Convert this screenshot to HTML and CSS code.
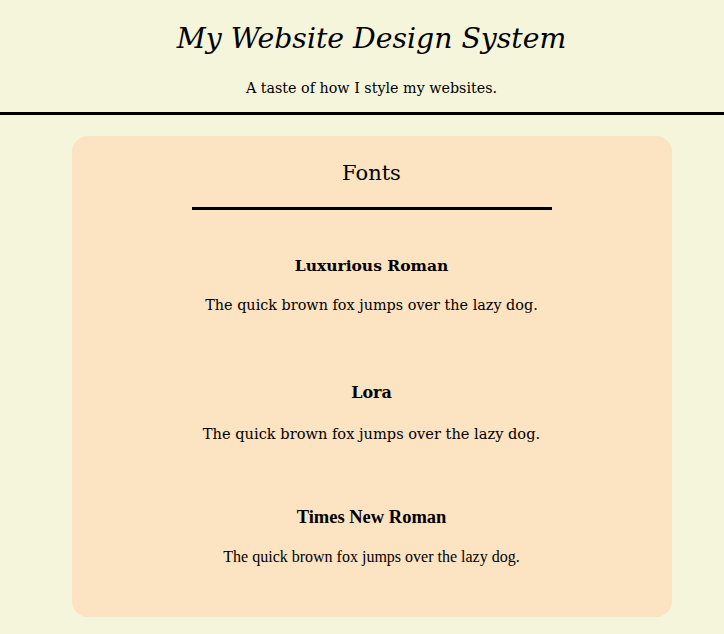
FILE: index.html
```html
<!DOCTYPE html>
<html lang="en">
<head>
<meta charset="utf-8">
<title>My Website Design System</title>
<link rel="stylesheet" href="styles.css">
</head>
<body>
<header class="site-header">
  <h1 class="site-title">My Website Design System</h1>
  <p class="site-tagline">A taste of how I style my websites.</p>
</header>
<main class="page">
  <section class="card">
    <h2 class="card-title">Fonts</h2>
    <hr class="divider">
    <div class="font-sample lux">
      <h3 class="font-name">Luxurious Roman</h3>
      <p class="font-text">The quick brown fox jumps over the lazy dog.</p>
    </div>
    <div class="font-sample lora">
      <h3 class="font-name">Lora</h3>
      <p class="font-text">The quick brown fox jumps over the lazy dog.</p>
    </div>
    <div class="font-sample times">
      <h3 class="font-name">Times New Roman</h3>
      <p class="font-text">The quick brown fox jumps over the lazy dog.</p>
    </div>
  </section>
</main>
</body>
</html>
```

FILE: styles.css
```css
html, body {
  margin: 0;
  padding: 0;
}
body {
  background: #f5f5dc;
  color: #000;
  font-family: "DejaVu Serif", "Liberation Serif", serif;
}
.site-header {
  text-align: center;
  border-bottom: 3px solid #000;
  padding: 19px 0 14px 19px;
}
.site-title {
  margin: 0;
  font-size: 28.3px;
  font-style: italic;
  font-weight: normal;
  line-height: 40px;
}
.site-tagline {
  margin: 19px 0 0;
  font-size: 14.3px;
  line-height: 20px;
}
.page {
  padding: 21px 0 18px 19px;
}
.card {
  width: 600px;
  margin: 0 auto;
  box-sizing: border-box;
  background: #fce3c1;
  border-radius: 16px;
  padding: 23px 0 50px;
  text-align: center;
}
.card-title {
  margin: 0;
  font-size: 21px;
  font-weight: normal;
  line-height: 28px;
}
.divider {
  width: 360px;
  margin: 20px auto 0;
  border: none;
  border-top: 3px solid #000;
  height: 0;
}
.font-sample {
  margin-top: 44px;
}
.lora {
  margin-top: 66px;
}
.times {
  margin-top: 61px;
  font-family: "Liberation Serif", serif;
}
.font-name {
  margin: 0;
  font-size: 16px;
  line-height: 24px;
}
.font-text {
  margin: 17px 0 0;
  font-size: 14.5px;
  line-height: 20px;
}
.lux .font-name { font-size: 15.5px; }
.lux .font-text { font-size: 14.4px; }
.lora .font-text { margin-top: 19px; font-size: 14.6px; }
.times .font-name { font-size: 18.5px; }
.times .font-text { font-size: 16px; margin-top: 18px; }
```
